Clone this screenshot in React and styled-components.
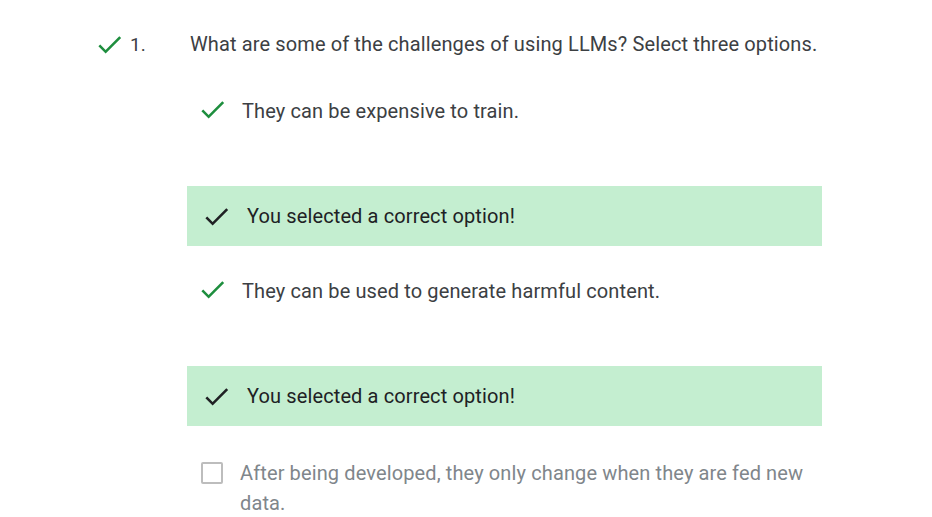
import React from 'react';
import styled, { createGlobalStyle } from 'styled-components';

const GlobalStyle = createGlobalStyle`
  html, body {
    margin: 0;
    padding: 0;
    background: #ffffff;
  }
  body {
    font-family: Roboto, "Noto Sans", Arial, sans-serif;
    color: #3c4043;
    letter-spacing: 0.12px;
  }
`;

const Page = styled.div`
  width: 932px;
  height: 517px;
  overflow: hidden;
  padding: 30px 0 0 94px;
  box-sizing: border-box;
`;

const QuestionRow = styled.div`
  display: flex;
  align-items: center;
  height: 28px;
`;

const StatusIcon = styled.div`
  width: 31px;
  height: 31px;
  display: flex;
  flex: none;
  color: ${props => props.color || '#1e8e3e'};
  svg {
    width: 31px;
    height: 31px;
    fill: currentColor;
  }
`;

const Number = styled.span`
  width: 60px;
  margin-left: 5px;
  font-size: 19px;
  color: #3c4043;
`;

const QuestionText = styled.span`
  font-size: 20px;
  color: #3c4043;
`;

const Options = styled.div`
  margin-left: 93px;
  width: 635px;
  padding-top: 38px;
`;

const OptionRow = styled.div`
  display: flex;
  align-items: flex-start;
  padding-left: 10px;
  margin-top: ${props => props.first ? '0' : props.muted ? '32px' : '30px'};
  gap: 14px;
`;

const OptionText = styled.span`
  font-size: 20px;
  line-height: 30px;
  color: ${props => props.muted ? '#80868b' : '#3c4043'};
  padding-right: 18px;
`;

const IconSlot = styled.div`
  margin-top: -2px;
  flex: none;
`;

const Checkbox = styled.div`
  width: 18px;
  height: 18px;
  margin: 4px 3px 0 4px;
  border: 2px solid #bdbdbd;
  border-radius: 2px;
  flex: none;
`;

const Feedback = styled.div`
  display: flex;
  align-items: center;
  height: 60px;
  margin-top: 60px;
  padding-left: 14px;
  gap: 15px;
  background: #c4eed0;
  font-size: 20px;
  color: #202124;
`;

const CheckIcon = ({ color }) => (
  <StatusIcon color={color}>
    <svg viewBox="0 0 24 24">
      <path d="M9 16.17L4.83 12l-1.42 1.41L9 19 21 7l-1.41-1.41z" />
    </svg>
  </StatusIcon>
);

const options = [
  { text: 'They can be expensive to train.', selected: true },
  { text: 'They can be used to generate harmful content.', selected: true },
  { text: 'After being developed, they only change when they are fed new data.', selected: false },
];

export default function App() {
  return (
    <>
      <GlobalStyle />
      <Page>
        <QuestionRow>
          <CheckIcon />
          <Number>1.</Number>
          <QuestionText>What are some of the challenges of using LLMs? Select three options.</QuestionText>
        </QuestionRow>
        <Options>
          {options.map((o, i) => (
            <React.Fragment key={i}>
              <OptionRow first={i === 0} muted={!o.selected}>
                {o.selected ? (
                  <IconSlot><CheckIcon /></IconSlot>
                ) : (
                  <Checkbox />
                )}
                <OptionText muted={!o.selected}>{o.text}</OptionText>
              </OptionRow>
              {o.selected && (
                <Feedback>
                  <CheckIcon color="#202124" />
                  <span>You selected a correct option!</span>
                </Feedback>
              )}
            </React.Fragment>
          ))}
        </Options>
      </Page>
    </>
  );
}
